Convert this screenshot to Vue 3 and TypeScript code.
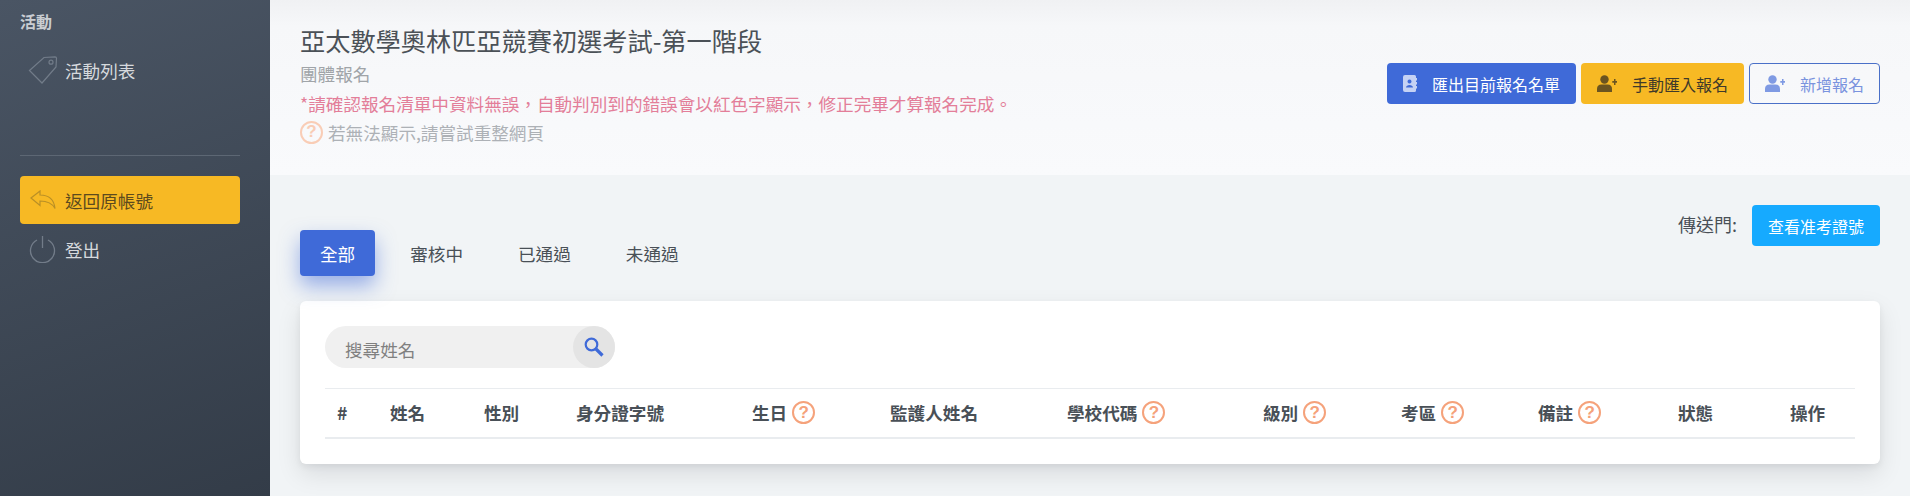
<script setup lang="ts">
interface Column {
  label: string;
  width: number;
  hint?: boolean;
}

const tabs = ['全部', '審核中', '已通過', '未通過'];

// header columns of the (empty) registration table
const columns: Column[] = [
  { label: '#', width: 53 },
  { label: '姓名', width: 94 },
  { label: '性別', width: 92 },
  { label: '身分證字號', width: 176 },
  { label: '生日', width: 138, hint: true },
  { label: '監護人姓名', width: 177 },
  { label: '學校代碼', width: 196, hint: true },
  { label: '級別', width: 138, hint: true },
  { label: '考區', width: 137, hint: true },
  { label: '備註', width: 140, hint: true },
  { label: '狀態', width: 112 },
  { label: '操作', width: 77 },
];
</script>

<template>
  <div class="layout">
    <aside class="sidebar">
      <div class="side-title">活動</div>
      <a class="side-item">
        <svg class="side-icon" width="30" height="28" viewBox="0 0 30 28" fill="none" stroke="#727c89" stroke-width="1.2">
          <path d="M1.5 14.5 L16 1.5 L27 .8 Q28.5 .8 28.5 2.2 L28 11 L14 27 Z" />
          <circle cx="23" cy="6.2" r="2" />
        </svg>
        <span>活動列表</span>
      </a>
      <hr class="side-line" />
      <a class="side-item active">
        <svg class="side-icon" width="30" height="20" viewBox="0 0 30 20" fill="none" stroke="#b98f26" stroke-width="1.2">
          <path d="M3 8 L12 1 V5 C20 5 26 9 27 18.5 C24 13 19 11 12 11 V15.5 Z" />
        </svg>
        <span>返回原帳號</span>
      </a>
      <a class="side-item">
        <svg class="side-icon" width="30" height="28" viewBox="0 0 30 28" fill="none" stroke="#727c89" stroke-width="1.3">
          <path d="M9 5 A12 12 0 1 0 20 5" />
          <path d="M14.5 1 V13" />
        </svg>
        <span>登出</span>
      </a>
    </aside>

    <main class="content">
      <header class="page-title">
        <div class="title-text">
          <h1>亞太數學奧林匹亞競賽初選考試-第一階段</h1>
          <div class="subheading">團體報名</div>
          <div class="note">*請確認報名清單中資料無誤，自動判別到的錯誤會以紅色字顯示，修正完畢才算報名完成。</div>
          <div class="hint-line">
            <span class="hint-icon pale">?</span>
            <span>若無法顯示,請嘗試重整網頁</span>
          </div>
        </div>
        <div class="title-actions">
          <button class="btn primary">
            <svg width="14" height="17" viewBox="0 0 14 17" fill="#c5d2f4">
              <path fill-rule="evenodd" d="M2 0 H11.5 Q13 0 13 1.5 V3 H14 V5.5 H13 V7 H14 V9.5 H13 V11 H14 V13.5 H13 V15.5 Q13 17 11.5 17 H2 Q0 17 0 15 V2 Q0 0 2 0 Z M6.5 4.5 A2 2 0 1 0 6.51 4.5 Z M3 12.5 H10 C10 9 3 9 3 12.5 Z" />
            </svg>
            <span>匯出目前報名名單</span>
          </button>
          <button class="btn warning">
            <svg width="20" height="17" viewBox="0 0 20 17" fill="#6b5420">
              <circle cx="7.5" cy="4.5" r="4.2" />
              <path d="M0 17 V14 Q0 9.5 4.5 9.5 H10.5 Q15 9.5 15 14 V17 Z" />
              <path d="M15.3 6 H17 V4 H18.5 V6 H20 V7.8 H18.5 V10 H17 V7.8 H15.3 Z" />
            </svg>
            <span>手動匯入報名</span>
          </button>
          <button class="btn outline">
            <svg width="20" height="17" viewBox="0 0 20 17" fill="#7f9ae3">
              <circle cx="7.5" cy="4.5" r="4.2" />
              <path d="M0 17 V14 Q0 9.5 4.5 9.5 H10.5 Q15 9.5 15 14 V17 Z" />
              <path d="M15.3 6 H17 V4 H18.5 V6 H20 V7.8 H18.5 V10 H17 V7.8 H15.3 Z" />
            </svg>
            <span>新增報名</span>
          </button>
        </div>
      </header>

      <section class="body">
        <div class="toolbar">
          <nav class="tabs">
            <a v-for="(tab, i) in tabs" :key="tab" class="tab" :class="{ selected: i === 0 }">{{ tab }}</a>
          </nav>
          <div class="portal">
            <span>傳送門:</span>
            <button class="btn info">查看准考證號</button>
          </div>
        </div>

        <div class="card">
          <div class="search">
            <span class="search-text">搜尋姓名</span>
            <span class="search-btn">
              <svg width="20" height="20" viewBox="0 0 20 20" fill="none" stroke="#3f6ad8">
                <circle cx="7.5" cy="7.5" r="5.8" stroke-width="2.2" />
                <path d="M12 12 L18.5 18.5" stroke-width="3.2" />
              </svg>
            </span>
          </div>
          <table class="grid">
            <colgroup>
              <col v-for="col in columns" :key="col.label" :style="{ width: col.width + 'px' }" />
            </colgroup>
            <thead>
              <tr>
                <th v-for="col in columns" :key="col.label">
                  <span class="th-inner">
                    {{ col.label }}
                    <span v-if="col.hint" class="hint-icon">?</span>
                  </span>
                </th>
              </tr>
            </thead>
          </table>
        </div>
      </section>
    </main>
  </div>
</template>

<style>
html,
body {
  margin: 0;
  background: #f1f4f6;
}
</style>

<style scoped>
.layout {
  display: flex;
  height: 496px;
  overflow: hidden;
  font-family: "Noto Sans CJK TC", "Noto Sans", sans-serif;
  color: #495057;
}

/* sidebar */
.sidebar {
  width: 270px;
  flex: none;
  box-sizing: border-box;
  padding: 9px 30px 0 20px;
  background: linear-gradient(160deg, #4a5564 0%, #333c48 100%);
  color: #d6d9dd;
}
.side-title {
  font-size: 16px;
  font-weight: 700;
  line-height: 24px;
  color: #c9cdd2;
  margin-bottom: 13px;
}
.side-item {
  display: flex;
  align-items: center;
  height: 48px;
  font-size: 17.6px;
  border-radius: 4px;
  padding-left: 8px;
}
.side-icon {
  flex: none;
  margin-right: 7px;
}
.side-line {
  border: 0;
  border-top: 1px solid #5d6774;
  margin: 61px 0 20px;
}
.side-item.active {
  background: #f7b924;
  color: #5c4a1e;
  margin-bottom: 1px;
}

/* page title */
.content {
  flex: 1;
  min-width: 0;
}
.page-title {
  height: 175px;
  box-sizing: border-box;
  padding: 23px 30px 0;
  display: flex;
  justify-content: space-between;
  background: linear-gradient(180deg, #f0f1f3 0, #f6f7f9 26px, #f9fafc 100%);
}
h1 {
  margin: 0;
  font-size: 25.2px;
  font-weight: 400;
  line-height: 34px;
  color: #4b5157;
}
.subheading {
  font-size: 17.6px;
  line-height: 34px;
  color: #a0a4a8;
}
.note {
  font-size: 17.6px;
  line-height: 26px;
  color: #e37e99;
}
.hint-line {
  display: flex;
  align-items: center;
  gap: 5px;
  height: 30px;
  font-size: 17.6px;
  color: #adb1b6;
}
.hint-icon {
  display: inline-flex;
  align-items: center;
  justify-content: center;
  width: 23px;
  height: 23px;
  box-sizing: border-box;
  border: 2.5px solid #f5a27b;
  border-radius: 50%;
  font-family: "Liberation Sans", sans-serif;
  font-size: 17px;
  font-weight: 700;
  color: #f5a27b;
}
.hint-icon.pale {
  border-color: #f9cdb6;
  color: #f9cdb6;
}
.title-actions {
  display: flex;
  gap: 5px;
  margin-top: 40px;
}

/* buttons */
.btn {
  display: inline-flex;
  align-items: center;
  gap: 15px;
  height: 41px;
  box-sizing: border-box;
  padding: 0 15px;
  border: 1px solid transparent;
  border-radius: 4px;
  font-family: inherit;
  font-size: 16px;
}
.btn.primary {
  background: #3f6ad8;
  color: #fff;
}
.btn.warning {
  background: #f7b924;
  color: #3f3a2a;
}
.btn.outline {
  background: transparent;
  border-color: #4a70c8;
  color: #7a93de;
}
.btn.info {
  background: #16aaff;
  color: #fff;
}

/* tabs row */
.body {
  padding: 30px 30px 0;
}
.toolbar {
  display: flex;
  justify-content: space-between;
  height: 71px;
}
.tabs {
  display: flex;
  gap: 15px;
  align-self: flex-end;
}
.tab {
  display: flex;
  align-items: center;
  height: 46px;
  padding: 0 20px;
  border-radius: 4px;
  font-size: 17.6px;
}
.tab.selected {
  background: #3f6ad8;
  color: #fff;
  box-shadow: 0 10px 20px rgba(63, 106, 216, 0.5);
}
.portal {
  display: flex;
  align-items: flex-start;
  gap: 15px;
  font-size: 18px;
  line-height: 38px;
}

/* card */
.card {
  margin-top: 25px;
  padding: 25px 25px 25px;
  background: #fff;
  border-radius: 6px;
  box-shadow: 0 10px 24px rgba(4, 9, 20, 0.1), 0 3px 6px rgba(4, 9, 20, 0.06);
}
.search {
  display: flex;
  align-items: center;
  justify-content: space-between;
  width: 290px;
  height: 42px;
  border-radius: 21px;
  background: #f0f0f0;
  margin-bottom: 20px;
}
.search-text {
  padding-left: 20px;
  padding-top: 4px;
  font-size: 17.6px;
  color: #808080;
}
.search-btn {
  display: flex;
  align-items: center;
  justify-content: center;
  width: 42px;
  height: 42px;
  border-radius: 50%;
  background: #e4e4e4;
}
.grid {
  width: 100%;
  table-layout: fixed;
  border-collapse: collapse;
}
th {
  height: 49px;
  padding: 0 0 0 12px;
  box-sizing: border-box;
  border-top: 1px solid #e9ecef;
  border-bottom: 2px solid #e9ecef;
  text-align: left;
  font-size: 17.6px;
  font-weight: 700;
  color: #495057;
  white-space: nowrap;
}
.th-inner {
  display: inline-flex;
  align-items: center;
  gap: 5px;
}
</style>
